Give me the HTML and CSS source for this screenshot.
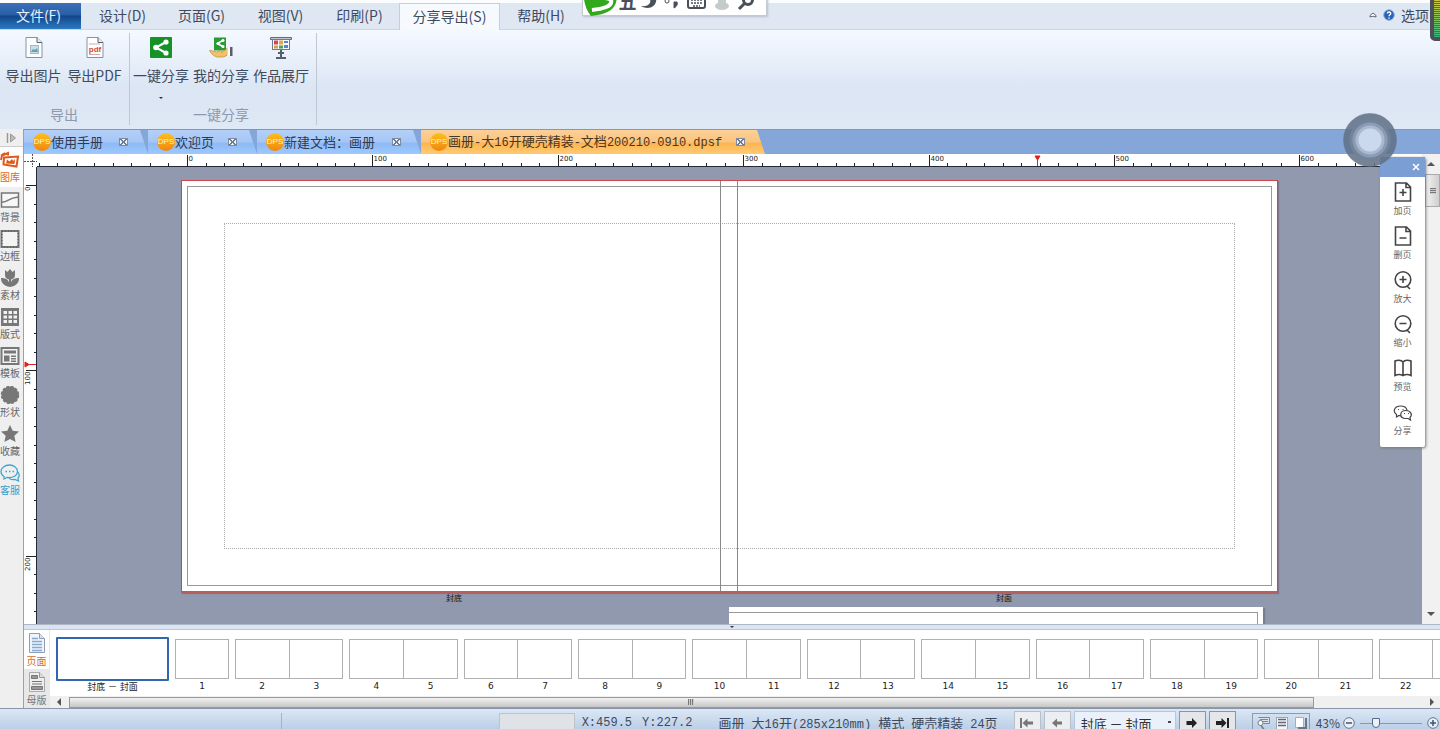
FILE: index.html
```html
<!DOCTYPE html>
<html lang="zh-CN">
<head>
<meta charset="utf-8">
<title>画册-大16开硬壳精装-文档200210-0910.dpsf</title>
<link rel="stylesheet" href="styles.css">
</head>
<body>
<div class="app">
  <header class="menubar">
    <nav class="menus">
      <button class="menu file">文件(F)</button>
      <button class="menu">设计(D)</button>
      <button class="menu">页面(G)</button>
      <button class="menu">视图(V)</button>
      <button class="menu">印刷(P)</button>
      <button class="menu current">分享导出(S)</button>
      <button class="menu">帮助(H)</button>
    </nav>
    <div class="options">
      <button class="plain" aria-label="收起"><svg width="8" height="6" viewBox="0 0 8 6"><path d="M1 5V3.500L4 1l3 2.500V5L4 4.200z" fill="#fff" stroke="#5d6673"/></svg></button>
      <button class="plain" aria-label="帮助"><svg width="12" height="12" viewBox="0 0 12 12"><circle cx="6" cy="6" r="5.300" fill="#2a62b5" stroke="#8fb0dc"/><path d="M4.300 4.600C4.300 2.500 7.800 2.500 7.700 4.500 7.700 5.700 6 5.700 6 7.200M6 8.400v1.300" fill="none" stroke="#fff" stroke-width="1.400"/></svg></button>
      <button class="plain">选项</button>
    </div>
  </header>

  <section class="ribbon">
    <div class="group">
      <div class="tools">
        <button class="tool"><svg width="24" height="24" viewBox="0 0 24 24"><path d="M4 1.500h11l5 5v15H4z" fill="#fdfeff" stroke="#8a929c"/><path d="M15 1.500v5h5" fill="#e3e8ee" stroke="#59616b"/><rect x="8.500" y="9.500" width="8" height="8" fill="#c8dcec" stroke="#a3b8ca"/><path d="M9 16l2-3 2 1 2-2 1 4z" fill="#5ea3a8"/></svg><span>导出图片</span></button>
        <button class="tool"><svg width="24" height="24" viewBox="0 0 24 24"><path d="M4 1.500h11l5 5v15H4z" fill="#fdfeff" stroke="#8a929c"/><path d="M15 1.500v5h5" fill="#e3e8ee" stroke="#59616b"/><path d="M6 8h11M6 18.500h11" stroke="#d9a8a2"/><text x="12" y="15.500" class="pdf">pdf</text></svg><span>导出PDF</span></button>
      </div>
      <div class="caption">导出</div>
    </div>
    <div class="group share">
      <div class="tools">
        <button class="tool"><svg width="24" height="24" viewBox="0 0 24 24"><rect x="1" y="1" width="22" height="21" rx="1" fill="#159127"/><path d="M17 6L7 11.500l10 5.500" fill="none" stroke="#fff" stroke-width="2"/><circle cx="17" cy="6" r="2.600" fill="#fff"/><circle cx="7" cy="11.500" r="2.800" fill="#fff"/><circle cx="17" cy="17" r="2.600" fill="#fff"/></svg><span>一键分享</span><i class="drop"></i></button>
        <button class="tool"><svg width="24" height="24" viewBox="0 0 24 24"><rect x="5" y="1.500" width="12" height="13" fill="#2a9a35"/><path d="M14.500 4L8.500 7.500l6 3.500" fill="none" stroke="#fff" stroke-width="1.500"/><circle cx="14" cy="4.500" r="1.500" fill="#fff"/><circle cx="9" cy="7.500" r="1.500" fill="#fff"/><circle cx="14" cy="10.500" r="1.500" fill="#fff"/><path d="M.5 14.500c3 0 5 1 7 1.500l4-1.500c1.500 0 1.500 1.500.5 2 2-.5 4-2.500 6.500-4.500v7l-4 2H8c-3-1-6-3-7.500-6.500z" fill="#f3c06c" stroke="#c98830" stroke-width=".7"/><path d="M18.500 11.500H21v8h-2.500z" fill="#fff"/><path d="M21 11h2.500v9H21z" fill="#5a5f66"/></svg><span>我的分享</span></button>
        <button class="tool"><svg width="24" height="24" viewBox="0 0 24 24"><path d="M1.500 1.500h21v2h-21z" fill="#b9c6d8" stroke="#5d6c80"/><rect x="3.500" y="3.500" width="17" height="10" fill="#f6f9fd" stroke="#6d7c90"/><path d="M5 4.500h4v4H5z" fill="#d8474c"/><path d="M10 4.500h4v4h-4z" fill="#eda63c"/><path d="M5 9.500h4v3H5z" fill="#d9a13b"/><path d="M10 9.500h4v3h-4z" fill="#4aa35d"/><path d="M15 5h4v2h-4zM15 9h4v3h-4z" fill="#5b83cd"/><path d="M12 14v7M9 17h6M7 22h10" stroke="#536073" stroke-width="2"/></svg><span>作品展厅</span></button>
      </div>
      <div class="caption">一键分享</div>
    </div>
  </section>

  <main class="main">
    <aside class="sidebar">
      <button class="expand" aria-label="展开"><svg width="11" height="10" viewBox="0 0 11 10"><path d="M1.500 0v10" stroke="#999" stroke-width="1.500"/><path d="M4.500 1l5 4-5 4z" fill="#bbb" stroke="#999"/></svg></button>
      <button class="side active"><svg width="20" height="18" viewBox="0 0 20 18"><path d="M4 6.500l14-1-1.500 10-13-2z" fill="#fff" stroke="#e0591c" stroke-width="2"/><path d="M6 12.500l1-4 2.500 2L12 8l1 2 2-2-.5 5z" fill="#e0591c"/><path d="M1 9l1-4.500L8 2v2.500M1 4.500L5 2" fill="none" stroke="#e0591c" stroke-width="2"/></svg><span>图库</span></button>
      <button class="side"><svg width="20" height="18" viewBox="0 0 20 18"><rect x="1.500" y="2" width="17" height="14" fill="#f7f7f7" stroke="#777" stroke-width="1.500"/><path d="M2 11c5 1 6-4 16-5" fill="none" stroke="#777" stroke-width="1.500"/></svg><span>背景</span></button>
      <button class="side"><svg width="20" height="18" viewBox="0 0 20 18"><rect x="1.500" y="1" width="17" height="16" fill="#f4f4f4" stroke="#777" stroke-width="2"/><path d="M2 1h16v16H2z" fill="none" stroke="#555" stroke-dasharray="1 2"/></svg><span>边框</span></button>
      <button class="side"><svg width="20" height="18" viewBox="0 0 20 18"><path d="M5 1l2.500 2L10 0l2.500 3L15 1v5c0 3-2 4-4 4.500v3C12 10 15 9 19 9c0 5-3 8-9 9C4 17 1 14 1 9c4 0 7 1 8 4.500v-3C7 10 5 9 5 6z" fill="#777"/></svg><span>素材</span></button>
      <button class="side"><svg width="20" height="18" viewBox="0 0 20 18"><rect x="1" y="0" width="18" height="18" fill="#777"/><path d="M3.500 3h3.500v3H3.500zM8.500 3H12v3H8.500zM13.500 3H17v3h-3.500zM3.500 7.500h3.500v3H3.500zM8.500 7.500H12v3H8.500zM13.500 7.500H17v3h-3.500zM3.500 12h3.500v3H3.500zM8.500 12H12v3H8.500zM13.500 12H17v3h-3.500z" fill="#f2f2f2"/></svg><span>版式</span></button>
      <button class="side"><svg width="20" height="18" viewBox="0 0 20 18"><rect x="1.500" y="1" width="17" height="16" fill="#f2f2f2" stroke="#777" stroke-width="2"/><path d="M4 3.500h12v3H4zM4 8.500h5.500v6H4zM11 8.500h5v1.500h-5zM11 11h5v1.500h-5zM11 13.500h5v1.500h-5z" fill="#777"/></svg><span>模板</span></button>
      <button class="side"><svg width="20" height="18" viewBox="0 0 20 18"><circle cx="10" cy="9" r="8.500" fill="#777"/><circle cx="10" cy="9" r="8.500" fill="none" stroke="#777" stroke-width="1.500" stroke-dasharray="3 1.500"/></svg><span>形状</span></button>
      <button class="side"><svg width="20" height="18" viewBox="0 0 20 18"><path d="M10 0l2.700 5.800 6.300.7-4.700 4.300L15.600 17 10 14l-5.600 3 1.300-6.200L1 6.500l6.300-.7z" fill="#777"/></svg><span>收藏</span></button>
      <button class="side service"><svg width="20" height="18" viewBox="0 0 20 18"><path d="M9.500 1C4.500 1 1 4 1 7.500c0 2.500 1 4 3 5V15l3-1.500c6 .8 10.500-2 10.500-6C17.500 4 14 1 9.500 1zM18 8c2 3 1 5 0 6l.5 3-3.500-1.500c-3 .5-5 0-6-1.500" fill="none" stroke="#3fa7cf" stroke-width="1.300"/><path d="M5.500 7.500h1.500M9 7.500h1.500M12.500 7.500H14" stroke="#3fa7cf" stroke-width="1.500"/></svg><span>客服</span></button>
    </aside>

    <div class="content">
      <div class="tabs">
        <button class="tab t1"><b class="dps">DPS</b><span class="name">使用手册</span><i class="close"></i></button>
        <button class="tab t2"><b class="dps">DPS</b><span class="name">欢迎页</span><i class="close"></i></button>
        <button class="tab t3"><b class="dps">DPS</b><span class="name">新建文档：画册</span><i class="close"></i></button>
        <button class="tab t4"><b class="dps">DPS</b><span class="name">画册<span class="mono">-</span>大<span class="mono">16</span>开硬壳精装<span class="mono">-</span>文档<span class="mono">200210-0910.dpsf</span></span><i class="close"></i></button>
      </div>
      <div class="editor">
        <div class="desk">
          <svg class="corner" width="13" height="13"><path d="M8.500 0v13M0 7.500h13" stroke="#555" stroke-dasharray="2 1"/></svg>
          <svg class="hruler" id="hruler" width="100%" height="13"></svg>
          <svg class="vruler" id="vruler" width="13" height="100%"></svg>
          <div class="canvas">
            <div class="spread">
              <div class="bleed"><div class="safe"></div></div>
              <div class="spine"></div>
            </div>
            <span class="pagename back">封底</span>
            <span class="pagename front">封面</span>
            <div class="next"><div class="nextline"></div></div>
          </div>
        </div>
        <div class="vscroll">
          <i class="arrow up"></i>
          <div class="vthumb"><i class="grip"></i></div>
          <i class="arrow down"></i>
        </div>
        <div class="palette">
          <div class="palette-head"><button class="plain" aria-label="关闭"><svg width="8" height="8" viewBox="0 0 8 8"><path d="M1 1l6 6M7 1L1 7" stroke="#fff" stroke-width="1.500"/></svg></button></div>
          <button class="act"><svg width="20" height="20" viewBox="0 0 20 20"><path d="M2.500 1h11l4 4v14h-15zM13 1v4.500h4.500M10 7v7M6.500 10.500h7"/></svg><span>加页</span></button>
          <button class="act"><svg width="20" height="20" viewBox="0 0 20 20"><path d="M2.500 1h11l4 4v14h-15zM13 1v4.500h4.500M6.500 12h7"/></svg><span>删页</span></button>
          <button class="act"><svg width="20" height="20" viewBox="0 0 20 20"><circle cx="10" cy="9.500" r="7.800"/><path d="M10 6v7M6.500 9.500h7M14 16l3 3"/></svg><span>放大</span></button>
          <button class="act"><svg width="20" height="20" viewBox="0 0 20 20"><circle cx="10" cy="9.500" r="7.800"/><path d="M6.500 9.500h7M14 16l3 3"/></svg><span>缩小</span></button>
          <button class="act"><svg width="20" height="20" viewBox="0 0 20 20"><path d="M10 4C8 1.500 4 2 2 3v14.500c3-1.500 6-1 8 0 2-1 5-1.500 8 0V3c-2-1-6-1.500-8 1zM10 4v13.500"/></svg><span>预览</span></button>
          <button class="act"><svg class="thin" width="20" height="20" viewBox="0 0 20 20"><path d="M8 14l-2-.5L3.500 15v-2.500C-1 9 2 4 7.500 4c4 0 6 2 6.500 4"/><path d="M13 8.500c-7 0-7 8 0 8h2l2.500 1.500-.5-2.500c3-3 .5-7-4-7z"/><path d="M5 7.500h1M9.500 7.500h1M11 11.500h1M15 11.500h1"/></svg><span>分享</span></button>
        </div>
      </div>
      <div class="splitter"><i class="drop"></i></div>
      <div class="pages">
        <div class="views">
          <button class="view on"><svg width="18" height="20" viewBox="0 0 18 20"><path d="M1.500.5h10l5 5v14h-15z" fill="#eef5fc" stroke="#8c9eb4"/><path d="M11.500.5v5h5" fill="#d5e2f0" stroke="#8c9eb4"/><path d="M4 8.500h10M4 11.500h10M4 14.500h10M4 17.500h10M4 5.500h6" stroke="#8aa9cf" stroke-width="1.500"/></svg><span>页面</span></button>
          <button class="view"><svg width="18" height="20" viewBox="0 0 18 20"><path d="M1.500.5h10l5 5v14h-15z" fill="#eee" stroke="#aaa"/><path d="M11.500.5v5h5" fill="#ddd" stroke="#999"/><path d="M3.500 3.500h6v3h-6zM3.500 14.500h11v3h-11z" fill="#999" stroke="#777"/><path d="M4 9.500h10M4 12h10" stroke="#777"/></svg><span>母版</span></button>
        </div>
        <div class="strip">
          <div class="thumbs" id="thumbs">
            <button class="thumb cover"><span class="sheets"><span class="sheet"></span></span><span class="nums"><span>封底 － 封面</span></span></button>
            <button class="thumb single"><span class="sheets"><span class="sheet"></span></span><span class="nums"><span>1</span></span></button>
            <div class="pairs" id="pairs"></div>
          </div>
          <div class="hscroll">
            <i class="arrow left"></i>
            <div class="track"><div class="hthumb"><i class="grip turned"></i></div></div>
            <i class="arrow right"></i>
          </div>
        </div>
      </div>
    </div>
  </main>

  <footer class="status">
    <div class="slot"></div>
    <div class="progress"></div>
    <div class="coords mono"><span>X:459.5</span><span>Y:227.2</span></div>
    <div class="info"><span>画册</span><span>大<span class="mono">16</span>开<span class="mono">(285x210mm)</span></span><span>横式</span><span>硬壳精装</span><span><span class="mono">24</span>页</span></div>
    <div class="pager">
      <button class="nav off" aria-label="首页"><svg width="14" height="12" viewBox="0 0 14 12"><path d="M1 1v10" stroke="#777" stroke-width="2"/><path d="M2.500 6l5-4.500v3H13v3H7.500v3z" fill="#777"/></svg></button>
      <button class="nav off" aria-label="上一页"><svg width="14" height="12" viewBox="0 0 14 12"><path d="M2 6l5-4.500v3h5v3H7v3z" fill="#777"/></svg></button>
      <select class="jump" aria-label="页面"><option>封底 － 封面</option></select>
      <button class="nav" aria-label="下一页"><svg width="14" height="12" viewBox="0 0 14 12"><path d="M12 6L7 1v3H1.500v4H7v3z" fill="#222"/></svg></button>
      <button class="nav" aria-label="末页"><svg width="14" height="12" viewBox="0 0 14 12"><path d="M13 1v10" stroke="#222" stroke-width="2"/><path d="M11.500 6l-5-5v3H1v4h5.500v3z" fill="#222"/></svg></button>
    </div>
    <div class="modes">
      <button class="plain" aria-label="查看"><svg width="14" height="13" viewBox="0 0 14 13"><path d="M2.500.5h11v6h-6" fill="#dce3ec" stroke="#7c8796"/><path d="M4 2.500h8M7 4.500h5" stroke="#7c8796"/><circle cx="4.500" cy="6" r="2.500" fill="#fff" stroke="#6f7a89"/><path d="M5 8.500l3 4" stroke="#6f7a89" stroke-width="1.500"/></svg></button>
      <button class="plain" aria-label="列表"><svg width="14" height="13" viewBox="0 0 14 13"><rect x="1.500" y=".5" width="11" height="12" fill="#f2f5f8" stroke="#9aa"/><path d="M3 2.500h8M3 5.500h8M3 8.500h8" stroke="#667" stroke-width="1.500"/></svg></button>
      <button class="plain" aria-label="双页"><svg width="14" height="13" viewBox="0 0 14 13"><path d="M1.500.5h8v10h-8z" fill="#fff" stroke="#aab"/><path d="M12 1v10H4" fill="none" stroke="#6b7788" stroke-width="2"/></svg></button>
    </div>
    <div class="zoom">
      <label for="zoom">43%</label>
      <button class="plain" aria-label="缩小"><svg width="12" height="12" viewBox="0 0 12 12"><circle cx="6" cy="6" r="5.300" fill="#e8eff8" stroke="#647891"/><path d="M3 6h6" stroke="#405470" stroke-width="1.500"/></svg></button>
      <input id="zoom" type="range" min="0" max="200" value="43">
      <button class="plain" aria-label="放大"><svg width="12" height="12" viewBox="0 0 12 12"><circle cx="6" cy="6" r="5.300" fill="#e8eff8" stroke="#647891"/><path d="M3 6h6M6 3v6" stroke="#405470" stroke-width="1.500"/></svg></button>
    </div>
  </footer>

  <div class="ime">
    <svg class="ime-logo" width="34" height="26" viewBox="0 0 34 26"><path d="M0 0h32c3 6 2 13-3 18-5 4-12 6-21 7C2 18 1 10 0 0z" fill="#32a81c"/><path d="M6 3c6 6 18 2 22 6 2 7-10 9-19 10" fill="none" stroke="#fff" stroke-width="4"/></svg>
    <span class="ime-mode">五</span>
    <svg width="128" height="20" viewBox="0 0 128 20"><path d="M11 4c3 5 1 10-8 9 8 5 17 0 15-9z" fill="#4a4f5a"/><circle cx="29" cy="8" r="2" fill="none" stroke="#4a4f5a"/><path d="M36 9h3c1 3-1 5-3 6z" fill="#4a4f5a" stroke="#4a4f5a"/><rect x="50" y="3" width="17" height="12" rx="2" fill="#fff" stroke="#4a4f5a" stroke-width="2"/><path d="M53 7h11M53 10h11M55 13h7" stroke="#4a4f5a" stroke-width="1.500" stroke-dasharray="2 1"/><circle cx="84" cy="8" r="4" fill="#c3cccb"/><ellipse cx="84" cy="13" rx="7" ry="4" fill="#c3cccb"/><circle cx="110" cy="7" r="4.500" fill="none" stroke="#4a4f5a" stroke-width="3"/><path d="M107 10l-6 6" stroke="#4a4f5a" stroke-width="3"/></svg>
  </div>
  <div class="meter"></div>
  <button class="assist" aria-label="悬浮按钮"></button>
</div>
<script src="app.js"></script>
</body>
</html>
```

FILE: styles.css
```css
* { box-sizing: border-box; }
body {
  margin: 0;
  font-family: "Noto Sans CJK SC", sans-serif;
  font-size: 14px;
  color: #3e4a5e;
}
button {
  margin: 0;
  padding: 0;
  border: 0;
  background: none;
  font: inherit;
  color: inherit;
}
svg { display: block; flex: none; }
.plain { display: flex; align-items: center; }
.mono { font-family: "Liberation Mono", "Noto Sans CJK SC", monospace; font-size: 12px; }

.app {
  position: relative;
  display: flex;
  flex-direction: column;
  height: 100vh;
  overflow: hidden;
}

.menubar {
  display: flex;
  justify-content: space-between;
  height: 30px;
  flex: none;
  border-top: 3px solid #fbfcfe;
  border-bottom: 1px solid #cfd6e1;
  background: #dfe7f3;
}
.menus { display: flex; }
.menu { width: 79px; line-height: 24px; padding-bottom: 2px; white-space: nowrap; }
.menu.file {
  width: 81px;
  margin-right: 2px;
  padding-right: 4px;
  color: #e6f0fb;
  background: linear-gradient(#3c6fb5, #2860a8 45%, #134589 50%, #2b7ac4);
}
.menu.current {
  width: 101px;
  height: 27px;
  border: 1px solid #c5cedb;
  border-bottom: 0;
  background: #f6fafe;
}
.menu.current + .menu { width: 82px; }
.options { display: flex; align-items: center; gap: 6px; padding: 0 11px 2px 0; line-height: 24px; }

.ribbon {
  display: flex;
  flex: none;
  height: 99px;
  padding: 3px 0 4px;
  background: linear-gradient(#f4f9ff, #e6eef9 35%, #dbe5f3 60%, #dfe8f5);
}
.group {
  display: flex;
  flex-direction: column;
  justify-content: space-between;
  padding: 0 4px 0 3px;
  border-right: 1px solid #bec7d4;
}
.group.share { padding: 0 5px 0 1px; }
.tools { display: flex; }
.tool { display: flex; flex-direction: column; align-items: center; width: 61px; gap: 3px; padding-top: 3px; line-height: 24px; white-space: nowrap; }
.share .tool { width: 60px; }
.caption { text-align: center; color: #8e99a9; line-height: 22px; }
.drop { width: 0; height: 0; border: 2px solid transparent; border-top: 2px solid #333; border-bottom: 0; }
.tool .drop { margin-top: 7px; }
.pdf { font: bold 8px "Liberation Sans", sans-serif; text-anchor: middle; fill: #d24a32; }

.main { display: flex; flex: 1; min-height: 0; }
.sidebar {
  width: 24px;
  flex: none;
  border-right: 1px solid #9aa1ac;
  background: #efefef;
  font-size: 10px;
  color: #666;
}
.expand { display: flex; align-items: center; justify-content: center; width: 100%; height: 18px; border-bottom: 1px solid #ccc; }
.side { display: flex; flex-direction: column; align-items: flex-start; width: 100%; height: 39px; padding-top: 4px; line-height: 16px; white-space: nowrap; }
.side.active { height: 40px; background: #fff; color: #dd6a1e; }
.side.service { color: #2fa0d0; }

.content { display: flex; flex-direction: column; flex: 1; min-width: 0; }
.tabs { display: flex; height: 25px; flex: none; background: #84a6d9; border-top: 1px solid #8098bf; }
.tab {
  display: flex;
  align-items: center;
  padding: 0 8px 0 9px;
  font-size: 13px;
  line-height: 20px;
  white-space: nowrap;
  color: #2e3b55;
  background: linear-gradient(#b5d0f8, #a5c6f6 50%, #8ebaf5 55%, #9dc8ff);
  clip-path: polygon(0 0, calc(100% - 8px) 0, 100% 100%, 0 100%);
}
.t1 { width: 124px; }
.t2 { width: 109px; }
.t3 { width: 164px; }
.t4 {
  width: 344px;
  color: #4b3520;
  background: linear-gradient(#fbd09a, #fbc47c 50%, #fdb450 55%, #ffcb74);
}
.name { margin-right: auto; }
.dps {
  width: 18px;
  height: 18px;
  border-radius: 50%;
  background: linear-gradient(#fdc01d, #f0860f);
  color: #fff3cf;
  font: 8px/18px "Liberation Sans", sans-serif;
  text-align: center;
}
.close {
  width: 9px;
  height: 8px;
  margin-right: 12px;
  border: 1px solid #7e8ca3;
  background:
    linear-gradient(45deg, transparent 40%, #6d7b92 40%, #6d7b92 60%, transparent 60%),
    linear-gradient(135deg, #eef3fb 40%, #6d7b92 40%, #6d7b92 60%, #eef3fb 60%);
}

.editor { position: relative; display: flex; flex: 1; min-height: 0; }
.desk {
  display: grid;
  grid-template: 13px 1fr / 13px 1fr;
  flex: 1;
  min-width: 0;
  overflow: hidden;
  background: #fff;
}
.hruler { border-bottom: 1px solid #23283a; }
.vruler { border-right: 1px solid #23283a; }
.hruler line, .vruler line { stroke: #222; }
.hruler text, .vruler text { font: 7px "DejaVu Sans", sans-serif; fill: #222; }
.hruler path, .vruler path { fill: #d22; stroke: #d22; }
.canvas { position: relative; overflow: hidden; background: #9199ae; }
.spread {
  position: absolute;
  left: 144px;
  top: 13px;
  width: 1097px;
  height: 413px;
  padding: 5px;
  border: 1px solid #d2434c;
  border-bottom: 2px solid #b5605f;
  background: #fff;
  box-shadow: 1px 1px 1px #80758a;
}
.bleed { height: 100%; padding: 36px; border: 1px solid #999; }
.safe { height: 100%; border: 1px dotted #aaa; }
.spine { position: absolute; left: 538px; top: 0; width: 18px; height: 100%; border: solid #888; border-width: 0 1px; }
.pagename { position: absolute; top: 426px; font-size: 8px; line-height: 10px; color: #111; }
.back { left: 409px; }
.front { left: 959px; }
.next { position: absolute; left: 692px; top: 440px; width: 534px; height: 60px; padding: 5px 5px 0 0; background: #fff; box-shadow: 2px 1px 1px #777f90; }
.nextline { height: 100%; border: 1px solid #999; border-left: 0; }

.vscroll { display: flex; flex-direction: column; align-items: center; width: 18px; flex: none; padding: 8px 0; background: #f1f1f1; }
.vthumb { display: flex; align-items: center; justify-content: center; width: 15px; height: 33px; margin: 8px 0 auto 3px; border: 1px solid #aaa; background: linear-gradient(90deg, #f2f2f2, #cfcfcf); }
.grip { width: 6px; height: 6px; background: repeating-linear-gradient(#777 0 1px, #ccc 1px 2px); }
.grip.turned { background: repeating-linear-gradient(90deg, #777 0 1px, #ccc 1px 2px); }
.arrow { width: 0; height: 0; border: 4px solid transparent; flex: none; }
.up { border-bottom-color: #555; border-top: 0; }
.down { border-top-color: #555; border-bottom: 0; }
.left { border-right-color: #555; border-left: 0; }
.right { border-left-color: #555; border-right: 0; }

.palette {
  position: absolute;
  right: 15px;
  top: 3px;
  width: 45px;
  padding-bottom: 6px;
  background: #fff;
  border-radius: 2px;
  box-shadow: 1px 1px 3px #777;
}
.palette-head { display: flex; justify-content: flex-end; height: 20px; padding-right: 5px; background: #7b9fd5; }
.act { display: flex; flex-direction: column; align-items: center; width: 100%; height: 44px; padding-top: 5px; font-size: 9px; line-height: 18px; color: #666; }
.act svg { fill: none; stroke: #444; stroke-width: 1.600; }
.act svg.thin { stroke-width: 1.200; }

.splitter { display: flex; align-items: center; justify-content: center; height: 6px; flex: none; background: #dbe4f2; border-top: 1px solid #aeb7c5; border-bottom: 1px solid #bdc8d4; }

.pages { display: flex; height: 78px; flex: none; background: #fff; }
.views { width: 26px; flex: none; background: #e8e8e8; font-size: 10px; color: #777; }
.view { display: flex; flex-direction: column; align-items: center; width: 25px; height: 39px; padding-top: 3px; line-height: 15px; }
.view.on { background: #fff; color: #dd6a1e; }
.strip { display: flex; flex-direction: column; justify-content: space-between; flex: 1; min-width: 0; overflow: hidden; }
.thumbs { display: flex; gap: 6px; padding: 7px 0 0 6px; margin-right: -47px; align-items: flex-start; }
.thumb { display: block; color: #222; font: 9px/13px "DejaVu Sans", "Noto Sans CJK SC", sans-serif; }
.sheets { display: flex; height: 40px; border: 1px solid #b3b0b3; }
.sheet { flex: 1; }
.sheet + .sheet { border-left: 1px solid #b3b0b3; }
.nums { display: flex; padding-top: 1px; }
.nums span { flex: 1; text-align: center; }
.cover { width: 113px; }
.cover .sheets { height: 44px; border: 2px solid #3068b0; border-radius: 1px; }
.cover .nums { padding-top: 0; }
.single { width: 54px; }
.single, .pairs { margin-top: 2px; }
.pairs { display: flex; flex: 1; gap: 6px; }
.pairs .thumb { flex: 1; }
.hscroll { display: flex; align-items: center; gap: 8px; height: 12px; padding: 0 6px 0 7px; background: #f0f0f0; }
.track { flex: 1; }
.hthumb { display: flex; align-items: center; justify-content: center; width: 92%; height: 11px; border: 1px solid #999; background: linear-gradient(#f2f2f2, #c6c6c6); }

.status {
  display: flex;
  align-items: flex-start;
  flex: none;
  height: 21px;
  padding: 4px 1px 0 0;
  overflow: hidden;
  border-top: 1px solid #8b97a8;
  background: linear-gradient(#dbe7f5, #bccfe7);
  font-size: 13px;
  line-height: 20px;
  white-space: nowrap;
}
.slot { width: 282px; height: 20px; border-right: 1px solid #a3b2c7; }
.progress { width: 76px; height: 20px; margin: 0 7px 0 auto; border: 1px solid #bcc3cc; background: #dfe3e8; }
.coords { display: flex; gap: 10px; margin-right: 26px; line-height: 20px; }
.info { display: flex; gap: 7px; margin-right: 16px; }
.pager { display: flex; align-items: flex-start; gap: 3px; margin: -2px 16px 0 0; }
.nav { display: flex; align-items: center; justify-content: center; width: 27px; height: 24px; border: 1px solid #8c95a1; background: #e4e6ea; }
.nav.off { border-color: #b9c0c9; background: #eceef1; }
.jump {
  appearance: none;
  width: 102px;
  height: 24px;
  padding: 0 6px;
  border: 1px solid #bac6d6;
  background: linear-gradient(#444, #444) 93px 9px / 3px 2px no-repeat #eaf1fa;
  font: 13px "Noto Sans CJK SC", sans-serif;
  color: #333;
}
.modes { display: flex; gap: 5px; width: 58px; height: 24px; padding: 3px 3px; border: 1px solid #8b9bb2; align-items: flex-start; margin-right: 6px; }
.zoom { display: flex; align-items: center; gap: 3px; font-size: 12px; }
.zoom input { appearance: none; width: 62px; height: 14px; margin: 0 2px; background: linear-gradient(#8598b2, #8598b2) 0 7px / 100% 1px no-repeat; }
.zoom input::-webkit-slider-thumb { appearance: none; width: 8px; height: 10px; border: 1px solid #556a86; border-radius: 0 0 4px 4px; background: #eaf1fa; }

.ime { position: absolute; left: 582px; top: -10px; display: flex; align-items: center; width: 185px; height: 26px; background: #fff; border: 1px solid #c5cad2; box-shadow: 1px 1px 2px #b9c0ca; }
.ime-logo { align-self: flex-start; }
.ime-mode { width: 24px; text-align: center; font-size: 18px; font-weight: 700; line-height: 18px; padding-bottom: 4px; color: #4a4f5a; }
.meter {
  position: absolute;
  right: -4px;
  top: -4px;
  width: 14px;
  height: 45px;
  border: 4px solid #4c4f58;
  border-radius: 5px;
  background: repeating-linear-gradient(transparent 0 1px, #5c6b49 1px 2px), linear-gradient(#d2c93d, #35b87e);
}
.assist {
  position: absolute;
  right: 43px;
  top: 113px;
  width: 54px;
  height: 54px;
  border-radius: 50%;
  background: radial-gradient(circle, #cbd9ee 0 11px, #aab9d0 12px 14px, #8a9bb3 15px 17px, #718399 18px 20px, #627287e0 21px 26px, #62728780 27px);
}
```

FILE: app.js
```js
const NS = "http://www.w3.org/2000/svg";
const STEP = 18.54;

function add(parent, name, attrs, text) {
  const node = document.createElementNS(NS, name);
  for (const key in attrs) node.setAttribute(key, attrs[key]);
  if (text !== undefined) node.textContent = text;
  parent.appendChild(node);
}

function drawRulers() {
  const h = document.getElementById("hruler");
  const v = document.getElementById("vruler");
  const width = h.getBoundingClientRect().width;
  const height = v.getBoundingClientRect().height;
  h.replaceChildren();
  v.replaceChildren();
  for (let i = -8; 150 + i * STEP < width; i++) {
    const x = Math.round(150 + i * STEP) + 0.5;
    const major = i >= 0 && i % 10 === 0;
    add(h, "line", { x1: x, x2: x, y1: major ? 1 : 9, y2: 13 });
    if (major) add(h, "text", { x: x + 1, y: 7 }, i * 10);
  }
  for (let i = 0; 18 + i * STEP < height; i++) {
    const y = Math.round(18 + i * STEP) + 0.5;
    const major = i % 10 === 0;
    add(v, "line", { y1: y, y2: y, x1: major ? 2 : 10, x2: 13 });
    if (major) add(v, "text", { x: 0, y: 0, "text-anchor": "end", transform: `translate(6 ${y + 1}) rotate(-90)` }, i * 10);
  }
  add(h, "path", { d: "M998 2h5l-2.500 4zM1000.500 6v7" });
  add(v, "path", { d: "M1 195v5l4-2.500zM5 197.500h8" });
}

function drawPairs() {
  const box = document.getElementById("pairs");
  for (let n = 2; n < 24; n += 2) {
    const b = document.createElement("button");
    b.className = "thumb";
    b.innerHTML = `<span class="sheets"><span class="sheet"></span><span class="sheet"></span></span><span class="nums"><span>${n}</span><span>${n + 1}</span></span>`;
    box.appendChild(b);
  }
}

drawPairs();
drawRulers();
window.addEventListener("resize", drawRulers);
```
